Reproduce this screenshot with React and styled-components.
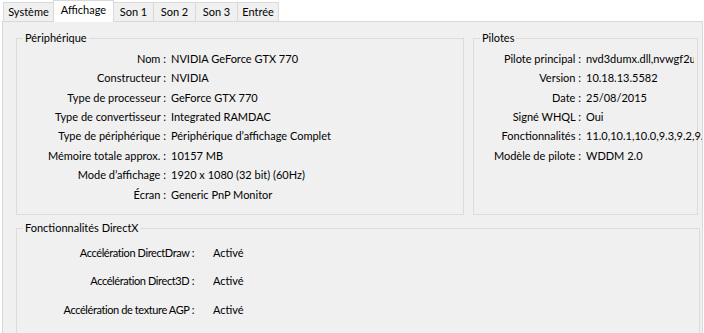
import React from 'react'
import styled, { createGlobalStyle } from 'styled-components'

const GlobalStyle = createGlobalStyle`
  html, body { margin: 0; padding: 0; background: #fff; }
  body {
    font-family: Lato, "Noto Sans", sans-serif;
    font-size: 11px;
    color: #000;
  }
`

const Window = styled.div`
  width: 704px;
  height: 333px;
  overflow: hidden;
  display: flex;
  flex-direction: column;
  background: #fff;
`

const TabStrip = styled.div`
  display: flex;
  align-items: flex-end;
  height: 21px;
  padding-left: 3px;
  position: relative;
  z-index: 2;
`

const Tab = styled.div`
  box-sizing: border-box;
  width: ${p => p.$w}px;
  height: ${p => (p.$active ? 22 : 19)}px;
  margin-left: -1px;
  margin-bottom: ${p => (p.$active ? -1 : 0)}px;
  border: 1px solid #d9d9d9;
  border-bottom: none;
  background: ${p => (p.$active ? '#fff' : '#f0f0f0')};
  display: flex;
  align-items: center;
  justify-content: center;
  padding-bottom: ${p => (p.$active ? 3 : 0)}px;
  line-height: 14px;
  white-space: nowrap;
  position: relative;
  z-index: ${p => (p.$active ? 1 : 0)};
  &:first-child { margin-left: 0; }
`

const Panel = styled.div`
  flex: 1;
  margin: 0 1px 0 2px;
  background: #f0f0f0;
  border: 1px solid #d9d9d9;
  border-bottom: none;
  padding: 9px 2px 0 13px;
  overflow: hidden;
  display: flex;
  flex-direction: column;
  gap: 6px;
`

const TopRow = styled.div`
  display: flex;
  gap: 9px;
  padding-right: 2px;
`

const Group = styled.fieldset`
  margin: 0;
  padding: 0;
  min-width: 0;
  border: 1px solid #dcdcdc;
  ${p => (p.$w ? `width: ${p.$w}px; flex: none; box-sizing: border-box;` : 'flex: 1;')}
`

const Legend = styled.legend`
  margin-left: 6px;
  padding: 0 2px;
  line-height: 14px;
`

const Rows = styled.div`
  display: grid;
  grid-template-columns: ${p => p.$label}px minmax(0, 1fr);
  column-gap: ${p => p.$gap}px;
  grid-auto-rows: ${p => p.$row}px;
  align-items: center;
  padding: ${p => p.$top}px 3px ${p => p.$bottom}px 0;
`

const Label = styled.div`
  text-align: right;
  white-space: nowrap;
  line-height: 14px;
  letter-spacing: ${p => (p.$tight ? '-0.4px' : 'normal')};
`

const Value = styled.div`
  white-space: nowrap;
  line-height: 14px;
  overflow: ${p => (p.$spill ? 'visible' : 'hidden')};
`

const tabs = [
  ['Système', 51],
  ['Affichage', 61, true],
  ['Son 1', 41],
  ['Son 2', 43],
  ['Son 3', 43],
  ['Entrée', 42],
]

const device = [
  ['Nom :', 'NVIDIA GeForce GTX 770'],
  ['Constructeur :', 'NVIDIA'],
  ['Type de processeur :', 'GeForce GTX 770'],
  ['Type de convertisseur :', 'Integrated RAMDAC'],
  ['Type de périphérique :', 'Périphérique d’affichage Complet'],
  ['Mémoire totale approx. :', '10157 MB'],
  ['Mode d’affichage :', '1920 x 1080 (32 bit) (60Hz)'],
  ['Écran :', 'Generic PnP Monitor'],
]

const drivers = [
  ['Pilote principal :', 'nvd3dumx.dll,nvwgf2umx.dll,nvwgf2umx.dll,nvwgf2umx.dll'],
  ['Version :', '10.18.13.5582'],
  ['Date :', '25/08/2015'],
  ['Signé WHQL :', 'Oui'],
  ['Fonctionnalités :', '11.0,10.1,10.0,9.3,9.2,9.1', true],
  ['Modèle de pilote :', 'WDDM 2.0'],
]

const directx = [
  ['Accélération DirectDraw :', 'Activé'],
  ['Accélération Direct3D :', 'Activé'],
  ['Accélération de texture AGP :', 'Activé'],
]

function renderRows(list, tight) {
  return list.map(([label, value, spill]) => (
    <React.Fragment key={label}>
      <Label $tight={tight}>{label}</Label>
      <Value $spill={spill}>{value}</Value>
    </React.Fragment>
  ))
}

export default function App() {
  return (
    <Window>
      <GlobalStyle />
      <TabStrip>
        {tabs.map(([name, w, active]) => (
          <Tab key={name} $w={w} $active={active}>{name}</Tab>
        ))}
      </TabStrip>
      <Panel>
        <TopRow>
          <Group $w={448}>
            <Legend>Périphérique</Legend>
            <Rows $label={149} $gap={5} $row={19.43} $top={4} $bottom={10}>
              {renderRows(device)}
            </Rows>
          </Group>
          <Group>
            <Legend>Pilotes</Legend>
            <Rows $label={107} $gap={5} $row={19.43} $top={4} $bottom={10}>
              {renderRows(drivers)}
            </Rows>
          </Group>
        </TopRow>
        <Group>
          <Legend>Fonctionnalités DirectX</Legend>
          <Rows $label={177} $gap={19} $row={28.7} $top={3} $bottom={30}>
            {renderRows(directx, true)}
          </Rows>
        </Group>
      </Panel>
    </Window>
  )
}
